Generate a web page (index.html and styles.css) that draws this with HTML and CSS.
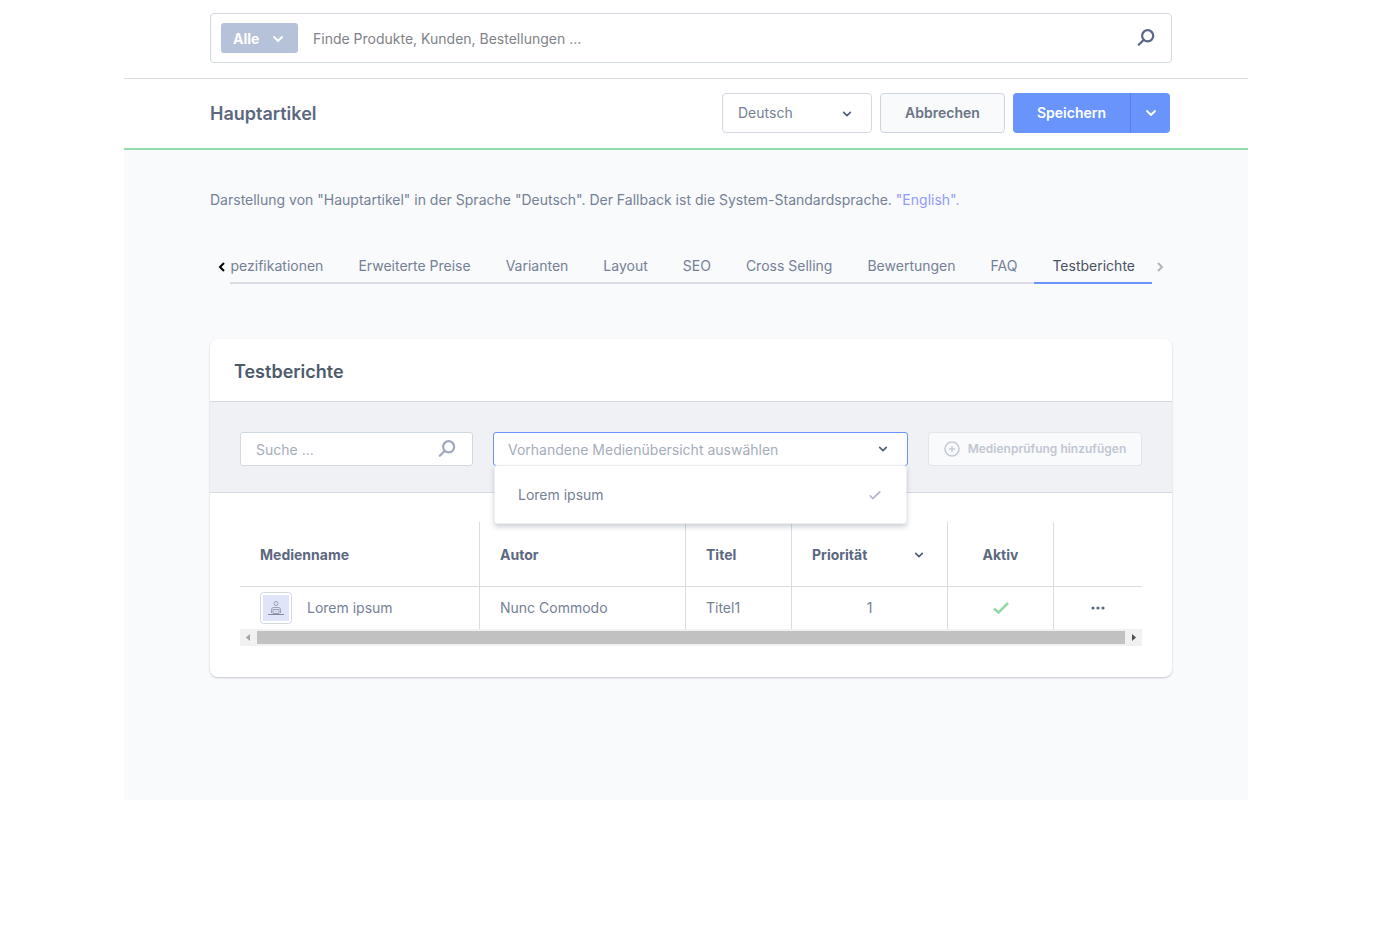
FILE: index.html
```html
<!DOCTYPE html>
<html lang="de">
<head>
<meta charset="utf-8">
<meta name="viewport" content="width=device-width, initial-scale=1">
<title>Hauptartikel</title>
<link rel="stylesheet" href="styles.css">
</head>
<body>
<div class="frame">
  <div class="topbar">
    <form class="global-search" role="search">
      <button type="button" class="search-type">Alle
        <svg class="chevron" viewBox="0 0 12 12" aria-hidden="true"><path d="M2 4l4 4 4-4"/></svg>
      </button>
      <input class="global-input" type="search" aria-label="Suche" placeholder="Finde Produkte, Kunden, Bestellungen ...">
      <svg class="lens" viewBox="0 0 18 18" aria-hidden="true"><circle cx="10.500" cy="7" r="5"/><path d="M7 10.500L2.500 15"/></svg>
    </form>
  </div>

  <header class="page-head">
    <h1 class="page-title">Hauptartikel</h1>
    <div class="language">
      <select class="language-select" aria-label="Sprache"><option>Deutsch</option></select>
      <svg class="chevron chevron-small chevron-over" viewBox="0 0 12 12" aria-hidden="true"><path d="M2 4l4 4 4-4"/></svg>
    </div>
    <button type="button" class="btn btn-cancel">Abbrechen</button>
    <div class="split">
      <button type="button" class="btn btn-save">Speichern</button>
      <button type="button" class="btn btn-more" aria-label="Weitere Optionen">
        <svg class="chevron" viewBox="0 0 12 12" aria-hidden="true"><path d="M2 4l4 4 4-4"/></svg>
      </button>
    </div>
  </header>

  <main class="content">
    <p class="info">Darstellung von "Hauptartikel" in der Sprache "Deutsch". Der Fallback ist die System-Standardsprache. <a class="info-link" href="#">"English".</a></p>

    <nav class="tabs" aria-label="Produktbereiche">
      <button type="button" class="tab-arrow" aria-label="Zurück"><svg class="arrow" viewBox="0 0 8 12" aria-hidden="true"><path d="M6 2L2 6l4 4"/></svg></button>
      <div class="tab-list">
        <a class="tab" href="#">Spezifikationen</a>
        <a class="tab" href="#">Erweiterte Preise</a>
        <a class="tab" href="#">Varianten</a>
        <a class="tab" href="#">Layout</a>
        <a class="tab" href="#">SEO</a>
        <a class="tab" href="#">Cross Selling</a>
        <a class="tab" href="#">Bewertungen</a>
        <a class="tab" href="#">FAQ</a>
        <a class="tab tab-active" href="#" aria-current="page">Testberichte</a>
      </div>
      <button type="button" class="tab-arrow tab-arrow-end" aria-label="Weiter"><svg class="arrow" viewBox="0 0 8 12" aria-hidden="true"><path d="M2 2l4 4-4 4"/></svg></button>
    </nav>

    <section class="card">
      <h2 class="card-title">Testberichte</h2>
      <div class="toolbar">
        <div class="field">
          <input class="field-input" type="search" aria-label="Suche in Testberichten" placeholder="Suche ...">
          <svg class="lens lens-muted" viewBox="0 0 18 18" aria-hidden="true"><circle cx="10.500" cy="7" r="5"/><path d="M7 10.500L2.500 15"/></svg>
        </div>
        <div class="field combo">
          <input class="field-input" type="text" role="combobox" aria-expanded="true" aria-controls="media-options" aria-label="Medienübersicht" placeholder="Vorhandene Medienübersicht auswählen">
          <svg class="chevron chevron-small" viewBox="0 0 12 12" aria-hidden="true"><path d="M2 4l4 4 4-4"/></svg>
          <ul class="options" id="media-options" role="listbox">
            <li class="option" role="option" aria-selected="true">Lorem ipsum
              <svg class="check" viewBox="0 0 16 12" aria-hidden="true"><path d="M2 6.500L5.500 10 14 2"/></svg>
            </li>
          </ul>
        </div>
        <button type="button" class="btn btn-add" disabled>
          <svg class="plus" viewBox="0 0 16 16" aria-hidden="true"><circle cx="8" cy="8" r="7"/><path d="M8 5v6M5 8h6"/></svg>
          Medienprüfung hinzufügen
        </button>
      </div>

      <div class="grid">
        <table class="table">
          <colgroup><col><col class="col-author"><col class="col-small"><col class="col-priority"><col class="col-small"><col class="col-menu"></colgroup>
          <thead>
            <tr>
              <th scope="col">Medienname</th>
              <th scope="col">Autor</th>
              <th scope="col">Titel</th>
              <th scope="col"><div class="sortable">Priorität <svg class="chevron chevron-small" viewBox="0 0 12 12" aria-hidden="true"><path d="M2 4l4 4 4-4"/></svg></div></th>
              <th scope="col" class="center">Aktiv</th>
              <td></td>
            </tr>
          </thead>
          <tbody>
            <tr>
              <td><div class="media">
                <svg class="thumb" viewBox="0 0 32 32" aria-hidden="true">
                  <rect x=".5" y=".5" width="31" height="31" rx="3" fill="#fff" stroke="#d1d9e0"/>
                  <rect x="3" y="3" width="26" height="26" fill="#dfe4fb"/>
                  <g fill="none" stroke="#9a9fb2"><circle cx="16" cy="11.500" r="2"/><path d="M11.500 21v-3.500q0-2 2-2h5q2 0 2 2v3.500M13 17.500h6v4h-6zM16 19v1"/><path d="M8 22.500h16" stroke="#858a99"/></g>
                </svg>Lorem ipsum</div></td>
              <td>Nunc Commodo</td>
              <td>Titel1</td>
              <td class="center">1</td>
              <td class="center"><svg class="check check-active" viewBox="0 0 16 12" role="img" aria-label="Aktiv"><path d="M1 6.500L5.500 10.500 15 1"/></svg></td>
              <td class="center"><button type="button" class="menu-btn" aria-label="Aktionen"><svg class="dots" viewBox="0 0 14 4" aria-hidden="true"><circle cx="2" cy="2" r="1.600"/><circle cx="7" cy="2" r="1.600"/><circle cx="12" cy="2" r="1.600"/></svg></button></td>
            </tr>
          </tbody>
        </table>
        <div class="scrollbar" aria-hidden="true">
          <svg class="scroll-arrow" viewBox="0 0 17 17"><path d="M10 5v7L6 8.500z" fill="#a3a3a3"/></svg>
          <span class="scroll-thumb"></span>
          <svg class="scroll-arrow" viewBox="0 0 17 17"><path d="M7 5v7l4-3.500z" fill="#505050"/></svg>
        </div>
      </div>
    </section>
  </main>
</div>
</body>
</html>
```
FILE: styles.css
```css
* { box-sizing: border-box; }

body {
  margin: 0;
  background: #fff;
  color: #758195;
  font: 14px/20px Inter, "Liberation Sans", sans-serif;
}

button, input, select { font: inherit; color: inherit; }
h1, h2, p, ul { margin: 0; padding: 0; }
a { text-decoration: none; }
svg { flex: none; display: block; }

.frame { margin: 0 136px 0 124px; }

.chevron {
  width: 12px;
  height: 12px;
  fill: none;
  stroke: #52607a;
  stroke-width: 2;
  stroke-linecap: round;
  stroke-linejoin: round;
}
.chevron-small { width: 10px; height: 10px; }

.lens {
  width: 20px;
  height: 20px;
  fill: none;
  stroke: #5c6784;
  stroke-width: 2;
  stroke-linecap: round;
}
.lens-muted { stroke: #a0a9bb; }

.topbar {
  padding: 13px 76px 15px 86px;
  border-bottom: 1px solid #d8dde6;
}
.global-search {
  display: flex;
  align-items: center;
  gap: 15px;
  height: 50px;
  padding: 0 15px 0 10px;
  border: 1px solid #d4dae3;
  border-radius: 4px;
}
.search-type {
  display: flex;
  align-items: center;
  justify-content: space-between;
  width: 77px;
  height: 30px;
  padding: 1px 14px 0 12px;
  border: 0;
  border-radius: 3px;
  background: #b6c2d9;
  color: #fff;
  font-weight: 700;
}
.search-type .chevron { stroke: #fff; }
.global-input {
  flex: 1;
  min-width: 0;
  padding: 2px 0 0;
  border: 0;
  outline: 0;
  background: none;
}
.global-input::placeholder { color: #808388; opacity: 1; }

.page-head {
  display: flex;
  align-items: center;
  gap: 8px;
  padding: 14px 78px 15px 86px;
  border-bottom: 2px solid #93dcaa;
}
.page-title {
  flex: 1;
  padding-top: 2px;
  color: #5b6880;
  font-size: 18px;
  line-height: 24px;
  font-weight: 600;
}
.language { position: relative; width: 150px; }
.language-select {
  appearance: none;
  width: 100%;
  height: 40px;
  padding: 0 15px;
  border: 1px solid #d4dae3;
  border-radius: 4px;
  background: #fff;
}
.chevron-over {
  position: absolute;
  top: 16px;
  right: 20px;
  pointer-events: none;
}
.btn {
  height: 40px;
  padding: 0;
  border: 0;
  border-radius: 4px;
  font-weight: 600;
}
.btn-cancel {
  width: 125px;
  border: 1px solid #cfd5df;
  background: #f9fafc;
  color: #6b7385;
}
.split { display: flex; }
.btn-save {
  width: 117px;
  border-radius: 4px 0 0 4px;
  background: #6894fb;
  color: #fff;
}
.btn-more {
  display: grid;
  place-items: center;
  width: 40px;
  border-left: 1px solid #5a80dd;
  border-radius: 0 4px 4px 0;
  background: #6894fb;
}
.btn-more .chevron { stroke: #fff; }

.content {
  min-height: 650px;
  padding: 40px 76px 60px 86px;
  background: #f9fafc;
}
.info-link { color: #9299fb; }

.tabs {
  display: flex;
  align-items: center;
  margin-top: 39px;
}
.tab-arrow {
  display: grid;
  place-items: center;
  width: 20px;
  height: 24px;
  padding: 0 0 0 4px;
  border: 0;
  background: none;
}
.tab-arrow-end { padding: 0 4px 0 0; }
.arrow {
  width: 8px;
  height: 12px;
  fill: none;
  stroke: #000;
  stroke-width: 2;
}
.tab-arrow-end .arrow { stroke: #b3b5b8; }
.tab-list {
  flex: 1;
  display: flex;
  justify-content: flex-end;
  min-width: 0;
  overflow: hidden;
  box-shadow: inset 0 -2px #d9dce4;
}
.tab {
  flex: none;
  padding: 7px 17px 6px 18px;
  border-bottom: 2px solid transparent;
  color: #758195;
}
.tab-active { border-color: #6894fb; color: #4c5360; }

.card {
  margin-top: 55px;
  border-radius: 8px;
  background: #fff;
  box-shadow: 0 1px 2px rgba(40, 50, 70, .26);
}
.card-title {
  padding: 21px 24px 17px;
  color: #4d5b6c;
  font-size: 18px;
  line-height: 24px;
  font-weight: 600;
}
.toolbar {
  display: flex;
  gap: 20px;
  padding: 30px 30px 26px;
  border: solid #d4d9e1;
  border-width: 1px 0;
  background: #f0f1f5;
}
.field {
  display: flex;
  align-items: center;
  width: 233px;
  height: 34px;
  padding: 0 15px;
  border: 1px solid #d1d9e0;
  border-radius: 3px;
  background: #fff;
}
.field-input {
  flex: 1;
  min-width: 0;
  padding: 2px 0 0;
  border: 0;
  outline: 0;
  background: none;
}
.field-input::placeholder { color: #a5adbb; opacity: 1; }
.combo {
  position: relative;
  flex: 1;
  padding: 0 19px 0 14px;
  border-color: #6894fb;
}
.options {
  position: absolute;
  z-index: 1;
  top: 32px;
  left: 0;
  right: 0;
  border: 1px solid #eceef2;
  border-radius: 3px;
  background: #fff;
  box-shadow: 0 3px 5px rgba(60, 75, 100, .25);
  list-style: none;
}
.option {
  display: flex;
  align-items: center;
  justify-content: space-between;
  height: 57px;
  padding: 1px 24px 0 23px;
}
.check {
  width: 14px;
  height: 12px;
  fill: none;
  stroke: #b3bacb;
  stroke-width: 2;
}
.check-active {
  width: 16px;
  margin: 0 auto;
  stroke: #8edba4;
  stroke-width: 2.5;
}
.btn-add {
  display: flex;
  align-items: center;
  justify-content: center;
  gap: 8px;
  width: 214px;
  height: 34px;
  border: 1px solid #e2e5eb;
  background: #f9fafc;
  color: #c1c7d2;
  font-size: 12px;
}
.plus {
  width: 16px;
  height: 16px;
  fill: none;
  stroke: #c5cad5;
  stroke-width: 1.5;
}

.grid { padding: 29px 30px 31px; }
.table {
  width: 100%;
  table-layout: fixed;
  border-collapse: separate;
  border-spacing: 0;
}
.col-author { width: 206px; }
.col-small { width: 106px; }
.col-priority { width: 156px; }
.col-menu { width: 88px; }
.table th, .table td {
  height: 42px;
  padding: 0 20px;
  border-right: 1px solid #d9dce5;
  text-align: left;
}
.table tr > :last-child { border-right: 0; }
.table thead th, .table thead td {
  height: 65px;
  padding-top: 2px;
  border-bottom: 1px solid #d9dde6;
  color: #5b6880;
  font-weight: 700;
}
.table .center { text-align: center; }
.sortable {
  display: flex;
  align-items: center;
  justify-content: space-between;
  padding-right: 3px;
}
.media { display: flex; align-items: center; gap: 15px; }
.thumb { width: 32px; height: 32px; }
.menu-btn {
  display: block;
  margin: 0 auto;
  padding: 4px;
  border: 0;
  background: none;
}
.dots { width: 14px; height: 4px; fill: #5c6784; }

.scrollbar { display: flex; align-items: center; background: #f1f1f1; }
.scroll-arrow { width: 17px; height: 17px; }
.scroll-thumb { flex: 1; height: 13px; background: #c1c1c1; }
```
